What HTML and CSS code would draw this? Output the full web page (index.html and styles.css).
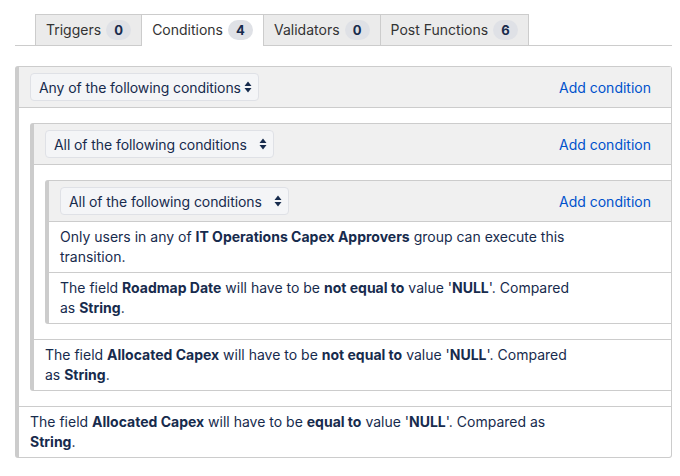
FILE: index.html
```html
<!DOCTYPE html>
<html>
<head>
<meta charset="utf-8">
<link rel="stylesheet" href="styles.css">
</head>
<body>
<div class="page">
  <div class="tabs">
    <div class="tab">Triggers <span class="badge">0</span></div>
    <div class="tab active">Conditions <span class="badge">4</span></div>
    <div class="tab">Validators <span class="badge">0</span></div>
    <div class="tab">Post Functions <span class="badge">6</span></div>
  </div>

  <div class="group outer">
    <div class="group-head">
      <div class="select"><span>Any of the following conditions</span><svg class="arrows" width="8" height="12" viewBox="0 0 8 12"><path d="M4 0.5 L7.5 5 H0.5 Z M4 11.5 L7.5 7 H0.5 Z" fill="#172b4d"/></svg></div>
      <a class="add">Add condition</a>
    </div>
    <div class="item nest">
      <div class="group inner">
        <div class="group-head">
          <div class="select"><span>All of the following conditions</span><svg class="arrows" width="8" height="12" viewBox="0 0 8 12"><path d="M4 0.5 L7.5 5 H0.5 Z M4 11.5 L7.5 7 H0.5 Z" fill="#172b4d"/></svg></div>
          <a class="add">Add condition</a>
        </div>
        <div class="item nest">
          <div class="group inner">
            <div class="group-head">
              <div class="select"><span>All of the following conditions</span><svg class="arrows" width="8" height="12" viewBox="0 0 8 12"><path d="M4 0.5 L7.5 5 H0.5 Z M4 11.5 L7.5 7 H0.5 Z" fill="#172b4d"/></svg></div>
              <a class="add">Add condition</a>
            </div>
            <div class="item text">Only users in any of <b>IT Operations Capex Approvers</b> group can execute this transition.</div>
            <div class="item text">The field <b>Roadmap Date</b> will have to be <b>not equal to</b> value '<b>NULL</b>'. Compared as <b>String</b>.</div>
          </div>
        </div>
        <div class="item text">The field <b>Allocated Capex</b> will have to be <b>not equal to</b> value '<b>NULL</b>'. Compared as <b>String</b>.</div>
      </div>
    </div>
    <div class="item text">The field <b>Allocated Capex</b> will have to be <b>equal to</b> value '<b>NULL</b>'. Compared as <b>String</b>.</div>
  </div>
</div>
</body>
</html>
```

FILE: styles.css
```css
* { box-sizing: border-box; }
body {
  margin: 0;
  font-family: "Inter", "Liberation Sans", sans-serif;
  font-size: 14px;
  color: #172b4d;
  background: #fff;
}
.page {
  padding: 14px 8px 0 15px;
  width: 680px;
}
.tabs {
  display: flex;
  padding-left: 20px;
  border-bottom: 1px solid #ccc;
  height: 32px;
}
.tab {
  height: 31px;
  display: flex;
  align-items: center;
  gap: 5px;
  padding: 0 10px 1px 10px;
  background: #ebebeb;
  border: 1px solid #ccc;
  border-bottom: none;
  border-right: none;
  color: #333;
}
.tab:last-child { border-right: 1px solid #ccc; }
.tab.active {
  background: #fff;
  height: 32px;
  margin-bottom: -1px;
  padding-bottom: 2px;
}
.badge {
  display: inline-flex;
  align-items: center;
  justify-content: center;
  min-width: 25px;
  height: 20px;
  padding: 0 8px;
  border-radius: 10px;
  background: #dfe1e6;
  font-weight: bold;
  font-size: 13px;
  color: #172b4d;
}
.group {
  border: 1px solid #ccc;
  border-left: 4px solid #ccc;
  border-radius: 3px;
  background: #fff;
}
.outer { margin-top: 20px; }
.inner { border-right: none; border-top-right-radius: 0; border-bottom-right-radius: 0; }
.group-head {
  display: flex;
  align-items: center;
  justify-content: space-between;
  background: #f0f0f0;
  padding: 0 20px 0 11px;
  height: 40px;
}
.select {
  width: 229px;
  height: 28px;
  display: flex;
  align-items: center;
  justify-content: space-between;
  gap: 3px;
  padding: 0 6px 0 8px;
  background: #f4f5f7;
  border: 1px solid #dfe1e6;
  border-radius: 4px;
  white-space: nowrap;
}
.select span { flex-shrink: 0; letter-spacing: -0.08px; }
.arrows { flex-shrink: 0; }
.add {
  color: #0052cc;
  text-decoration: none;
}
.item { border-top: 1px solid #ccc; }
.nest { padding: 15px 0 15px 11px; }
.text {
  padding: 5px 90px 5px 11px;
  line-height: 20px;
}
b { font-weight: 700; }
```
